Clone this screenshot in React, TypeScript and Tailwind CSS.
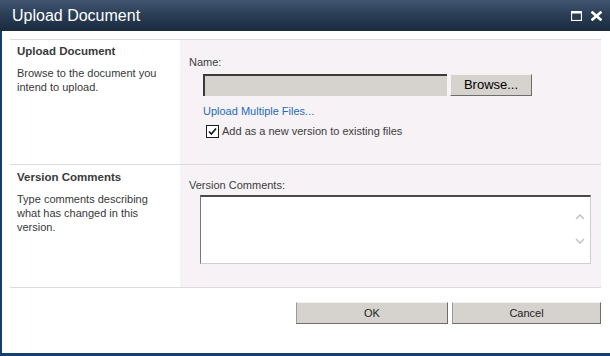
import React from "react";

const font = { fontFamily: '"Liberation Sans", Arial, sans-serif' };

export default function App() {
  return (
    <div className="w-[610px] h-[356px] bg-white flex flex-col overflow-hidden" style={font}>
      {/* Title bar */}
      <div className="h-[31px] shrink-0 bg-gradient-to-b from-[#415673] via-[#2a3d55] to-[#1a2b3f] flex items-center pl-[12px] pr-[8px]">
        <div className="text-white text-[16px] leading-none flex-1 pt-[1px]">Upload Document</div>
        <div className="flex items-center gap-[9px]">
          <svg width="11" height="10" viewBox="0 0 11 10">
            <rect x="0.5" y="0.5" width="10" height="9" fill="none" stroke="#ffffff" strokeWidth="1.2" />
            <rect x="0" y="0" width="11" height="2.5" fill="#ffffff" />
          </svg>
          <svg width="11" height="10" viewBox="0 0 11 10">
            <path d="M1.5 1.5 L9.5 8.5 M9.5 1.5 L1.5 8.5" stroke="#ffffff" strokeWidth="2.6" strokeLinecap="square" />
          </svg>
        </div>
      </div>

      {/* Body */}
      <div className="flex-1 flex flex-col border-l-2 border-b-[3px] border-[#15406e] pl-[8px] pr-[9px] pt-[8px]">
        <div className="h-px bg-[#dcdadc]" />
        {/* Section 1 */}
        <div className="flex h-[124px]">
          <div className="w-[170px] pl-[7px] pt-[4px] text-[#383838]">
            <div className="text-[11.5px] font-bold leading-[14px] text-[#3a3a3a]">Upload Document</div>
            <div className="mt-[8px] text-[11px] leading-[14px]">
              Browse to the document you
              <br />
              intend to upload.
            </div>
          </div>
          <div className="flex-1 bg-[#f6f2f6] pl-[9px] pt-[15px]">
            <div className="text-[11px] leading-[14px] text-[#3c3c3c]">Name:</div>
            <div className="flex mt-[5px] ml-[14px]">
              <div className="w-[244px] h-[22px] bg-[#d6d3ce] border-t-2 border-l-2 border-[#3a3a3a]" />
              <div className="ml-[3px] w-[82px] h-[22px] bg-[#d6d3ce] border border-t-[#f2f1ee] border-l-[#f2f1ee] border-r-[#6d6d6d] border-b-[#6d6d6d] flex items-center justify-center text-[13px] text-black">
                Browse...
              </div>
            </div>
            <div className="mt-[8px] ml-[14px] text-[11px] leading-[14px] text-[#1f6db4]">Upload Multiple Files...</div>
            <div className="mt-[6px] ml-[17px] flex items-center">
              <div className="w-[13px] h-[13px] border border-[#1c1c1c] bg-white flex items-center justify-center">
                <svg width="9" height="9" viewBox="0 0 9 9">
                  <path d="M1 4.5 L3.4 7 L8 1.5" fill="none" stroke="#111" strokeWidth="1.6" />
                </svg>
              </div>
              <div className="ml-[3px] text-[11px] leading-[14px] text-[#3c3c3c]">Add as a new version to existing files</div>
            </div>
          </div>
        </div>
        <div className="h-px bg-[#dcdadc]" />
        {/* Section 2 */}
        <div className="flex h-[122px]">
          <div className="w-[170px] pl-[7px] pt-[5px] text-[#383838]">
            <div className="text-[11.5px] font-bold leading-[14px] text-[#3a3a3a]">Version Comments</div>
            <div className="mt-[8px] text-[11px] leading-[14px]">
              Type comments describing
              <br />
              what has changed in this
              <br />
              version.
            </div>
          </div>
          <div className="flex-1 bg-[#f6f2f6] pl-[9px] pt-[13px]">
            <div className="text-[11px] leading-[14px] text-[#3c3c3c]">Version Comments:</div>
            <div className="mt-[3px] ml-[11px] w-[391px] h-[69px] bg-white border-t-2 border-t-[#4a4a4a] border-l border-l-[#7a7a7a] border-r border-r-[#cfcfcf] border-b border-b-[#cfcfcf] flex justify-end">
              <div className="w-[21px] flex flex-col items-center pt-[17px] gap-[18px]">
                <svg width="10" height="6" viewBox="0 0 10 6">
                  <path d="M1 5 L5 1 L9 5" fill="none" stroke="#c4c4c4" strokeWidth="1.5" />
                </svg>
                <svg width="10" height="6" viewBox="0 0 10 6">
                  <path d="M1 1 L5 5 L9 1" fill="none" stroke="#c4c4c4" strokeWidth="1.5" />
                </svg>
              </div>
            </div>
          </div>
        </div>
        <div className="h-px bg-[#dcdadc]" />
        {/* Buttons */}
        <div className="flex justify-end gap-[4px] mt-[14px]">
          <div className="w-[152px] h-[22px] bg-[#d6d3ce] border border-t-[#f4f3f1] border-l-[#9a9a9a] border-r-[#6d6d6d] border-b-[#6d6d6d] flex items-center justify-center text-[11px] text-[#222]">
            OK
          </div>
          <div className="w-[149px] h-[22px] bg-[#d6d3ce] border border-t-[#f4f3f1] border-l-[#9a9a9a] border-r-[#6d6d6d] border-b-[#6d6d6d] flex items-center justify-center text-[11px] text-[#222]">
            Cancel
          </div>
        </div>
      </div>
    </div>
  );
}
